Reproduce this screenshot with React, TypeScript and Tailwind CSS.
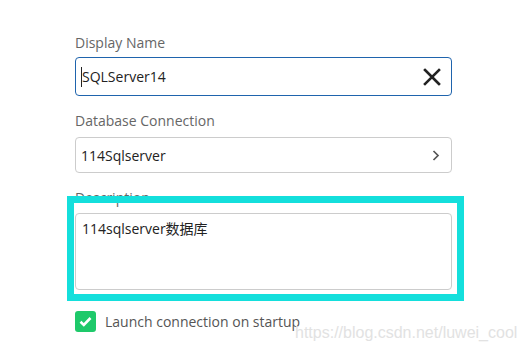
import React from 'react';

const labelCls = "text-[14px] leading-[20px] text-[#666666]";

// Connection settings form (display name, connection, description)
export default function App() {
  return (
    <div className="relative w-[524px] h-[352px] overflow-hidden bg-white font-['Open_Sans','Noto_Sans_CJK_SC',sans-serif]">
      <div className="flex w-[377px] flex-col ml-[75px] pt-[33px]">
        <label className={labelCls}>Display Name</label>
        <div className="mt-[4px] flex h-[39px] items-center rounded-[4px] border border-[#1f64ad] pl-[5px] pr-[10px]">
          <span className="h-[20px] w-px bg-[#222]" />
          <span className="flex-1 text-[14px] text-[#222]">SQLServer14</span>
          <svg width="18" height="18" viewBox="0 0 18 18" className="text-[#222]">
            <path d="M2 2 L16 16 M16 2 L2 16" stroke="currentColor" strokeWidth="2.6" strokeLinecap="square" />
          </svg>
        </div>

        <label className={`${labelCls} mt-[15px]`}>Database Connection</label>
        <div className="mt-[6px] flex h-[36px] items-center rounded-[4px] border border-[#cccccc] pl-[5px] pr-[11px]">
          <span className="flex-1 text-[14px] text-[#222]">114Sqlserver</span>
          <svg width="9" height="13" viewBox="0 0 9 13" className="text-[#555]">
            <path d="M2.5 2 L7 6.5 L2.5 11" fill="none" stroke="currentColor" strokeWidth="1.7" />
          </svg>
        </div>

        <label className={`${labelCls} mt-[15px]`}>Description</label>
        <div className="mt-[5px] h-[77px] rounded-[4px] border border-[#cccccc] px-[6px] pt-[4px] text-[14px] text-[#222]">
          114sqlserver数据库
        </div>

        <div className="mt-[21px] flex items-center gap-[9px]">
          <div className="flex h-[21px] w-[21px] items-center justify-center rounded-[3px] bg-[#1ec96a]">
            <svg width="13" height="11" viewBox="0 0 13 11">
              <path d="M1.5 5.8 L4.8 9 L11.5 2" fill="none" stroke="white" strokeWidth="2.6" />
            </svg>
          </div>
          <span className="text-[14px] text-[#555]">Launch connection on startup</span>
        </div>
      </div>

      {/* highlight annotation */}
      <div className="absolute left-[67px] top-[196px] h-[105px] w-[397px] border-[7px] border-[#14dfdc]" />

      {/* watermark */}
      <div className="absolute left-[295px] top-[323px] font-['Liberation_Sans',sans-serif] text-[16px] leading-[20px] text-[#e2e2e2]">
        https://blog.csdn.net/luwei_cool
      </div>
    </div>
  );
}
